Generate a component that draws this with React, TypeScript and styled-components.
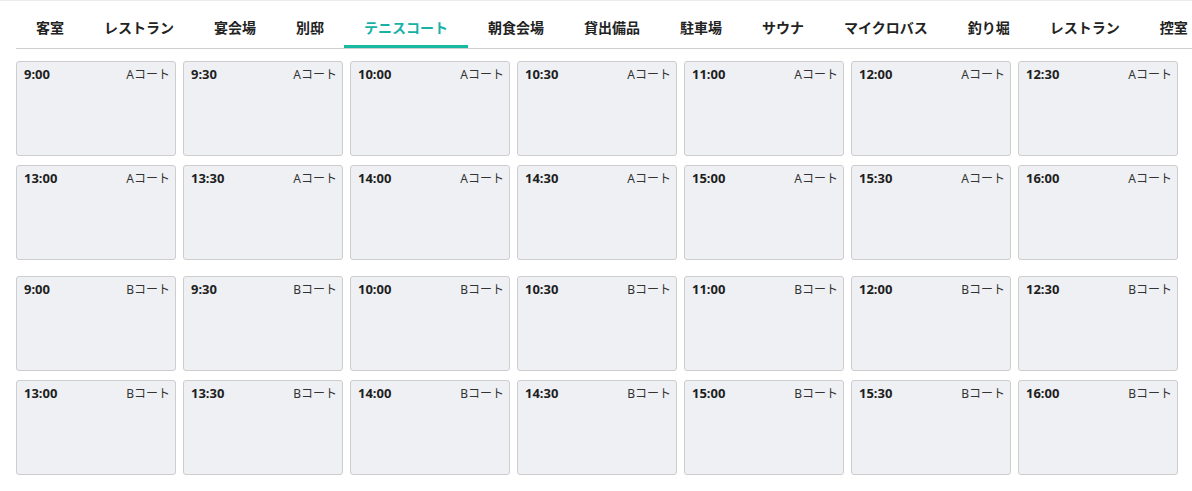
import React from "react";
import styled, { createGlobalStyle } from "styled-components";

const GlobalStyle = createGlobalStyle`
  html, body {
    margin: 0;
    padding: 0;
    background: #ffffff;
  }
  body {
    font-family: "Noto Sans", "Noto Sans CJK JP", sans-serif;
    color: #222;
    border-top: 1px solid #ececec;
    overflow: hidden;
  }
`;

const Page = styled.div`
  padding: 0 0 0 16px;
`;

const TabBar = styled.nav`
  display: flex;
  border-bottom: 1px solid #cfcfcf;
  overflow: hidden;
  white-space: nowrap;
`;

const Tab = styled.div<{ $active?: boolean }>`
  flex: none;
  padding: 17px 20px 7px;
  line-height: 20px;
  font-size: 14px;
  font-weight: 700;
  color: ${(p) => (p.$active ? "#17b1a6" : "#222")};
  border-bottom: 3px solid ${(p) => (p.$active ? "#17b9a2" : "transparent")};
  cursor: pointer;
`;

const Groups = styled.div`
  display: flex;
  flex-direction: column;
  gap: 16px;
  padding-top: 12px;
`;

const Grid = styled.div`
  display: grid;
  grid-template-columns: repeat(7, 160px);
  grid-auto-rows: 95px;
  column-gap: 7px;
  row-gap: 9px;
`;

const Slot = styled.div`
  box-sizing: border-box;
  background: #eef0f4;
  border: 1px solid #cdcdcd;
  border-radius: 3px;
  padding: 5px 5px 0 7px;
  display: flex;
  justify-content: space-between;
  align-items: flex-start;
`;

const Time = styled.span`
  font-size: 13px;
  font-weight: 700;
  line-height: 15px;
  color: #1e1e1e;
`;

const Court = styled.span`
  font-size: 12px;
  line-height: 15px;
  color: #333;
`;

const tabs = [
  "客室",
  "レストラン",
  "宴会場",
  "別邸",
  "テニスコート",
  "朝食会場",
  "貸出備品",
  "駐車場",
  "サウナ",
  "マイクロバス",
  "釣り堀",
  "レストラン",
  "控室",
];

const times = [
  "9:00",
  "9:30",
  "10:00",
  "10:30",
  "11:00",
  "12:00",
  "12:30",
  "13:00",
  "13:30",
  "14:00",
  "14:30",
  "15:00",
  "15:30",
  "16:00",
];

const courts = ["Aコート", "Bコート"];

export default function App() {
  return (
    <>
      <GlobalStyle />
      <Page>
        <TabBar>
          {tabs.map((t, i) => (
            <Tab key={i} $active={t === "テニスコート"}>
              {t}
            </Tab>
          ))}
        </TabBar>
        <Groups>
          {courts.map((c) => (
            <Grid key={c}>
              {times.map((t) => (
                <Slot key={t}>
                  <Time>{t}</Time>
                  <Court>{c}</Court>
                </Slot>
              ))}
            </Grid>
          ))}
        </Groups>
      </Page>
    </>
  );
}
